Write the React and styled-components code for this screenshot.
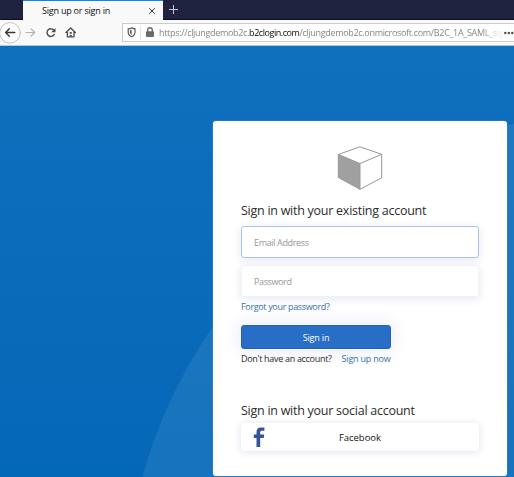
import React from "react";
import styled, { createGlobalStyle } from "styled-components";

const Global = createGlobalStyle`
  * { box-sizing: border-box; }
  body { margin: 0; overflow: hidden; font-family: "Open Sans", "Noto Sans", sans-serif; }
  button, input { font-family: inherit; }
`;

const Window = styled.div`
  width: 514px;
  height: 477px;
  overflow: hidden;
  display: flex;
  flex-direction: column;
`;

const TabStrip = styled.div`
  flex: none;
  height: 20px;
  padding-left: 23px;
  display: flex;
  background: #202340;
  border-bottom: 1px solid #0c0c26;
`;

const Tab = styled.div`
  width: 140px;
  height: 20px;
  padding: 0 7px 0 19px;
  display: flex;
  align-items: center;
  justify-content: space-between;
  background: #f9f9fa;
  border-top: 1px solid #0a84ff;
  color: #0c0c0d;
`;

const NewTab = styled.div`
  padding: 5px 0 0 6px;
  line-height: 0;
`;

const Toolbar = styled.div`
  flex: none;
  height: 26px;
  display: flex;
  align-items: center;
  background: #f9f9fa;
  border-bottom: 1px solid #b9c5d0;
`;

const NavIcons = styled.svg`
  flex: none;
  width: 122px;
  height: 26px;
`;

const AddressBar = styled.div`
  flex: none;
  width: 400px;
  height: 19px;
  display: flex;
  align-items: center;
  background: #fff;
  border: 1px solid #ccc;
`;

const AddressIcons = styled.svg`
  flex: none;
  width: 36px;
  height: 17px;
`;

const Url = styled.div`
  width: 344px;
  padding-top: 1px;
  display: flex;
  color: #858588;
  mask-image: linear-gradient(to right, #000 322px, rgba(0, 0, 0, 0.15) 340px);
`;

const Text = styled.span`
  display: block;
  flex: none;
  white-space: nowrap;
  font-size: ${(p) => p.$size || 9}px;
  line-height: ${(p) => p.$line || 14}px;
  letter-spacing: ${(p) => p.$track || 0}px;
  font-weight: ${(p) => p.$weight || 400};
  color: ${(p) => p.$color || "inherit"};
`;

const Page = styled.main`
  flex: 1;
  padding: 75px 0 0 213px;
  background:
    radial-gradient(circle 499px at 623px 565px, rgba(255, 255, 255, 0.075) 498.5px, transparent 499.5px),
    linear-gradient(#0f70be, #0869b9 75%, #0468b9);
`;

const Card = styled.section`
  width: 294px;
  height: 355px;
  padding: 25px 28px 0;
  display: flex;
  flex-direction: column;
  align-items: flex-start;
  background: #fff;
  border-radius: 3px;
  box-shadow: 0 0 0 0.6px #2e86ce;
`;

const Cube = styled.svg`
  width: 48px;
  height: 46px;
  margin: 0 0 8px 95px;
`;

const Heading = styled.h1`
  margin: 0;
  height: 22px;
  white-space: nowrap;
  font-size: 12.5px;
  font-weight: 400;
  line-height: 22px;
  letter-spacing: ${(p) => p.$track}px;
  color: #2c2c2c;
`;

const Field = styled.input`
  width: 238px;
  height: 32px;
  margin: ${(p) => p.$top}px 0 0;
  padding: 0 12px;
  border: 1px solid ${(p) => (p.$active ? "#a9c3e8" : "#f1f1f8")};
  border-radius: 3px;
  outline: none;
  background: #fff;
  box-shadow: 0 2px 8px rgba(50, 50, 160, 0.12);
  font-size: 9px;
  letter-spacing: ${(p) => p.$track}px;
  &::placeholder { color: #969696; opacity: 1; }
`;

const Link = styled.a`
  margin-top: ${(p) => p.$top || 0}px;
  white-space: nowrap;
  color: #3470ad;
  font-size: 9px;
  line-height: 14px;
  letter-spacing: ${(p) => p.$track}px;
`;

const SignIn = styled.button`
  width: 150px;
  height: 24px;
  margin-top: 11px;
  padding: 0;
  border: 1px solid #1a62bb;
  border-radius: 3px;
  background: #286ec7;
  color: #fff;
  font-size: 9px;
  letter-spacing: -0.15px;
  box-shadow: 0 0 0 1px #f8f8ff, 0 0 17px rgba(70, 70, 200, 0.15);
`;

const SignUpRow = styled.div`
  display: flex;
  gap: 10px;
  margin-top: 3px;
  height: 14px;
`;

const Social = styled.div`
  margin-top: 34px;
`;

const Provider = styled.button`
  width: 238px;
  height: 28px;
  margin-top: 1px;
  padding: 0 0 0 12px;
  display: flex;
  align-items: center;
  border: 0;
  border-radius: 3px;
  background: #fff;
  box-shadow: 0 1px 7px rgba(50, 50, 160, 0.16);
`;

const ProviderName = styled.span`
  margin-left: 74px;
  font-size: 9.5px;
  letter-spacing: -0.05px;
  color: #111;
`;

export default function App() {
  return (
    <Window>
      <Global />
      <TabStrip>
        <Tab>
          <Text $track={-0.85 / 4}>Sign up or sign in</Text>
          <svg width="8" height="8" viewBox="0 0 8 8"><path d="M1.2 1.2l5.6 5.6M6.8 1.2L1.2 6.8" stroke="#38383d" strokeWidth="1" /></svg>
        </Tab>
        <NewTab>
          <svg width="9" height="9" viewBox="0 0 9 9"><path d="M4.5 0v9M0 4.5h9" stroke="#c6c7d2" strokeWidth="1" /></svg>
        </NewTab>
      </TabStrip>
      <Toolbar>
        <NavIcons viewBox="0 0 122 26" fill="none" strokeLinecap="round" strokeLinejoin="round">
          <circle cx="10" cy="12.8" r="10.3" fill="#fdfdfd" stroke="#b4b4b6" strokeWidth="0.8" />
          <path d="M14.8 12.5H5.8M9.3 8.8l-3.7 3.7 3.7 3.7" stroke="#38383d" strokeWidth="1.4" />
          <path d="M26 12.5h8.5M31 8.8l3.7 3.7-3.7 3.7" stroke="#b2b2b4" strokeWidth="1.2" />
          <path d="M54 10.5A3.8 3.8 0 1 0 54.2 14.4" stroke="#4a4a4f" strokeWidth="1.4" />
          <path d="M55.5 8v4.2h-4.3z" fill="#4a4a4f" />
          <path d="M66 12.5l4.7-4.5 4.7 4.5M67.4 12.3v4.5h6.6v-4.5" stroke="#4a4a4f" strokeWidth="1.3" />
          <path d="M69.7 12h2v1.7h-2zM69.7 14.8h2v2h-2z" fill="#4a4a4f" />
        </NavIcons>
        <AddressBar>
          <AddressIcons viewBox="0 0 36 17" fill="none">
            <path d="M5.2 4.9q2-.2 3.4-1 1.5.8 3.4 1v3c0 2.2-1.2 3.9-3.4 4.8-2.2-.9-3.4-2.6-3.4-4.8z" stroke="#5a5a5e" strokeWidth="1.2" />
            <path d="M8.6 5.8l-1.7.6v1.8c0 1.2.6 2 1.7 2.7z" fill="#5a5a5e" />
            <path d="M17.5 2v13" stroke="#e0e0e2" />
            <rect x="23" y="7.2" width="8" height="5.8" rx=".8" fill="#6a6a6e" />
            <path d="M24.7 8V6.1a2.3 2.3 0 0 1 4.6 0V8" stroke="#6a6a6e" strokeWidth="1.4" />
          </AddressIcons>
          <Url>
            <Text $track={-0.32}>https://cljungdemob2c.</Text>
            <Text $track={-0.45} $weight={500} $color="#0c0c0d">b2clogin.com</Text>
            <Text $track={-0.32}>/cljungdemob2c.onmicrosoft.com/B2C_1A_SAML_sig</Text>
          </Url>
          <svg width="12" height="4" viewBox="0 0 12 4" fill="#4a4a4f"><circle cx="2.3" cy="2" r="1.2" /><circle cx="5.8" cy="2" r="1.2" /><circle cx="9.3" cy="2" r="1.2" /></svg>
        </AddressBar>
      </Toolbar>
      <Page>
        <Card>
          <Cube viewBox="0 0 48 46" fill="none" stroke="#979797" strokeWidth="1" strokeLinejoin="round">
            <path d="M2.3 8.5L24 17.5V43.3L2.3 31.5z" fill="#a0a0a0" />
            <path d="M2.3 8.5L23.8.8 45.7 8.3 24 17.5M45.7 8.3v23.5L24 43.3" />
          </Cube>
          <Heading $track={-0.26}>Sign in with your existing account</Heading>
          <Field $active $top={4} $track={-0.35} placeholder="Email Address" />
          <Field $top={7} $track={-0.38} placeholder="Password" />
          <Link $top={3} $track={-0.34}>Forgot your password?</Link>
          <SignIn>Sign in</SignIn>
          <SignUpRow>
            <Text $color="#2b2b2b" $track={-0.31}>Don't have an account?</Text>
            <Link $track={-0.22}>Sign up now</Link>
          </SignUpRow>
          <Social>
            <Heading $track={-0.26}>Sign in with your social account</Heading>
            <Provider>
              <svg width="12" height="20" viewBox="0 0 12 20"><path d="M3.5 20V11H.8V7.6h2.7V5C3.5 1.9 5.3.5 8 .5h3.4v3.2H9C7.7 3.7 7.2 4.3 7.2 5.4v2.2h4L10.8 11H7.2v9z" fill="#34549c" /></svg>
              <ProviderName>Facebook</ProviderName>
            </Provider>
          </Social>
        </Card>
      </Page>
    </Window>
  );
}
